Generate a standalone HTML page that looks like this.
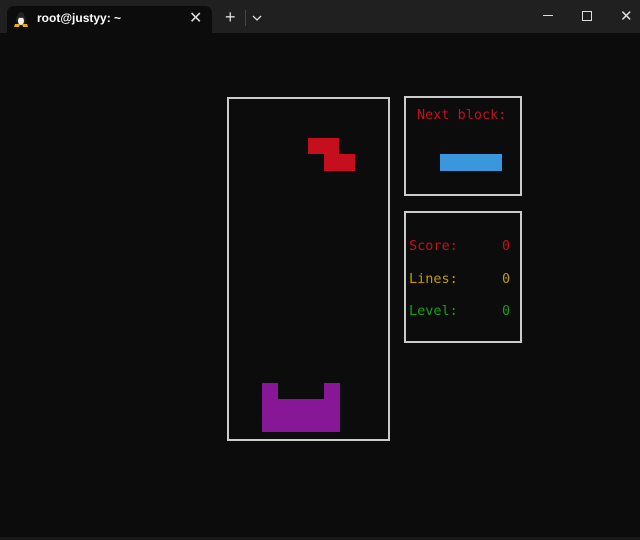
<!DOCTYPE html><html><head><style>
body{margin:0;width:640px;height:540px;background:#0c0c0c;position:relative;overflow:hidden;font-family:"DejaVu Sans Mono",monospace;}
.a{position:absolute}
.t{font-size:13.5px;line-height:16px;white-space:pre}
</style></head><body>
<div class="a" style="left:0;top:0;width:640px;height:33px;background:#202020"></div>
<div class="a" style="left:7px;top:6px;width:205px;height:28px;background:#0c0c0c;border-radius:7px 7px 0 0"></div>
<svg class="a" style="left:14px;top:11px" width="14" height="16" viewBox="0 0 14 16"><ellipse cx="7" cy="9" rx="5" ry="6" fill="#222"/><ellipse cx="7" cy="10" rx="3" ry="4" fill="#eee"/><path d="M1 13h5l-1 3H0zM8 13h5l1 3H9z" fill="#f0b000"/><circle cx="7" cy="4" r="3" fill="#222"/></svg>
<div class="a" style="left:37px;top:11px;font:bold 12px 'Liberation Sans',sans-serif;color:#fff">root@justyy: ~</div>
<div class="a" style="left:189px;top:8px;font:16px 'Liberation Sans',sans-serif;color:#ddd">✕</div>
<div class="a" style="left:225px;top:7px;font:18px 'Liberation Sans',sans-serif;color:#ddd">+</div>
<div class="a" style="left:245px;top:10px;width:1px;height:16px;background:#444"></div>
<svg class="a" style="left:252px;top:15px" width="10" height="6"><path d="M1 1l4 4 4-4" stroke="#ddd" fill="none" stroke-width="1.3"/></svg>
<div class="a" style="left:543px;top:15px;width:10px;height:1px;background:#ddd"></div>
<div class="a" style="left:582px;top:11px;width:8px;height:8px;border:1px solid #ddd"></div>
<div class="a" style="left:620px;top:7px;font:15px 'Liberation Sans',sans-serif;color:#ddd">✕</div>
<div class="a" style="left:227px;top:97px;width:159px;height:340px;border:2px solid #ccc"></div>
<div class="a" style="left:404px;top:96px;width:114px;height:96px;border:2px solid #ccc"></div>
<div class="a" style="left:404px;top:211px;width:114px;height:128px;border:2px solid #ccc"></div>
<div class="a" style="left:308px;top:138px;width:31px;height:16px;background:#c50f1f"></div>
<div class="a" style="left:324px;top:154px;width:31px;height:17px;background:#c50f1f"></div>
<div class="a" style="left:440px;top:154px;width:62px;height:17px;background:#3a96dd"></div>
<div class="a" style="left:262px;top:383px;width:16px;height:16px;background:#881798"></div>
<div class="a" style="left:324px;top:383px;width:16px;height:16px;background:#881798"></div>
<div class="a" style="left:262px;top:399px;width:78px;height:33px;background:#881798"></div>
<div class="a t" style="left:417px;top:107px;color:#c50f1f">Next block:</div>
<div class="a t" style="left:409px;top:238px;color:#c50f1f">Score:</div><div class="a t" style="left:502px;top:238px;color:#c50f1f">0</div>
<div class="a t" style="left:409px;top:271px;color:#c19c00">Lines:</div><div class="a t" style="left:502px;top:271px;color:#c19c00">0</div>
<div class="a t" style="left:409px;top:303px;color:#13a10e">Level:</div><div class="a t" style="left:502px;top:303px;color:#13a10e">0</div>
<div class="a" style="left:0;top:537px;width:640px;height:3px;background:#1a1a1a"></div>
</body></html>
